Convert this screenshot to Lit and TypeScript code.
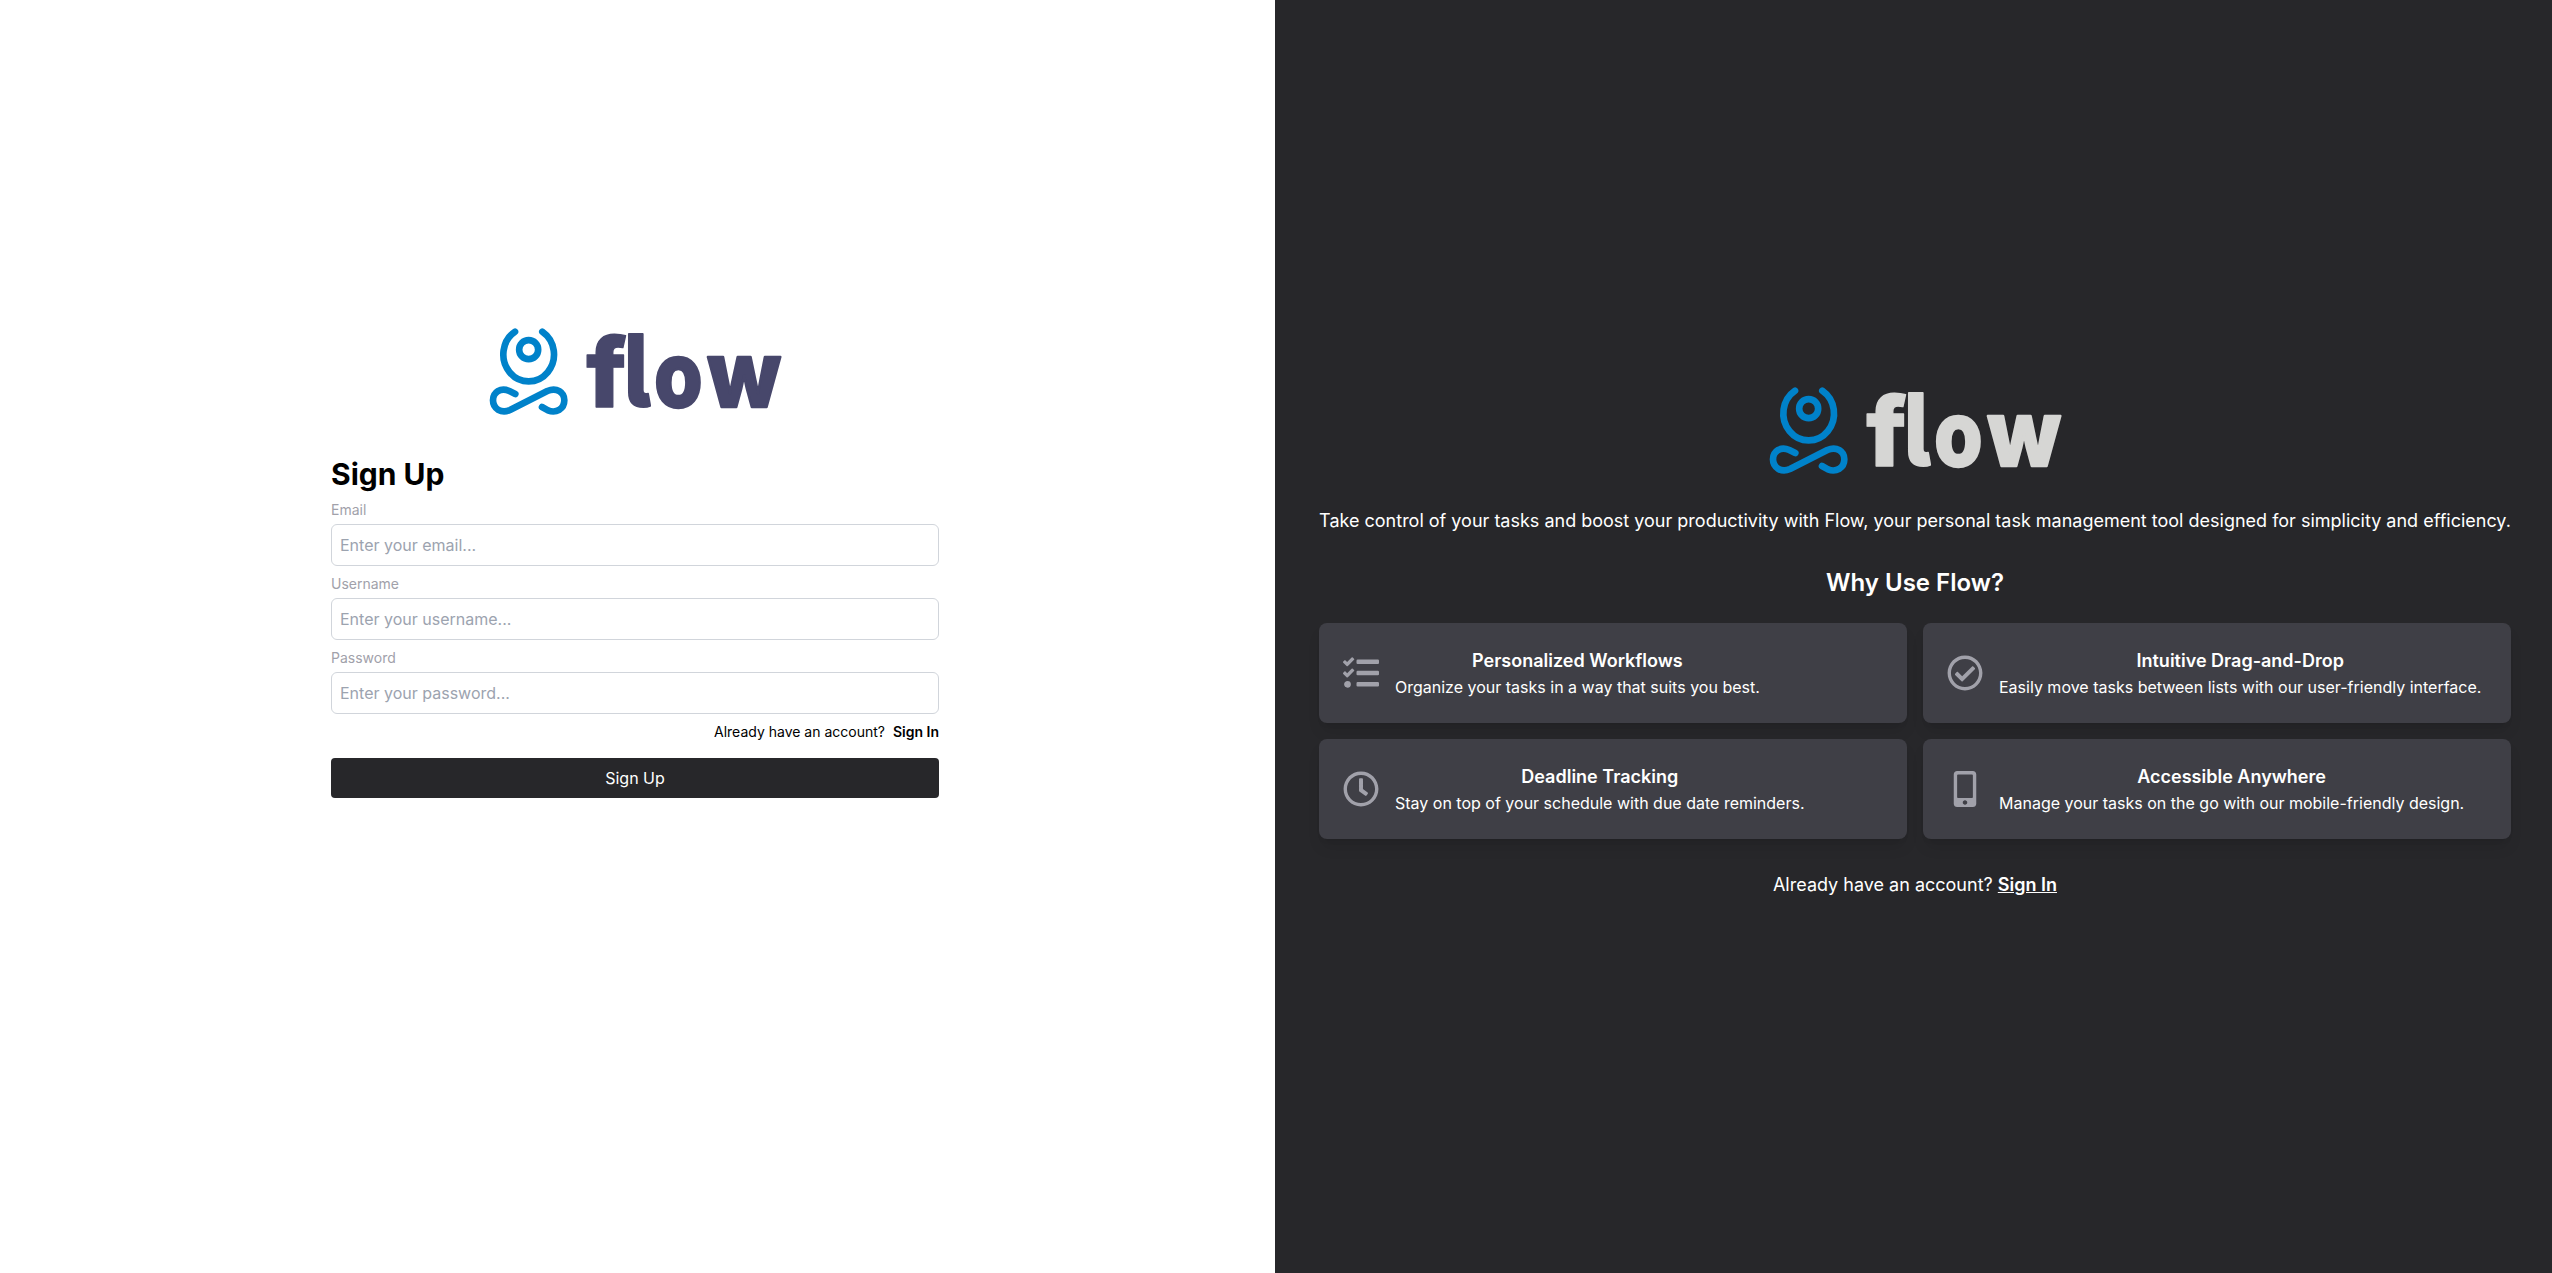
import { LitElement, html, css, svg } from "lit";
import { customElement, property } from "lit/decorators.js";

const ICONS: Record<string, { box: string; path: string }> = {
  tasks: {
    box: "0 0 512 512",
    path: "M139.61 35.5a12 12 0 0 0-17 0L58.93 98.81l-22.7-22.12a12 12 0 0 0-17 0L3.53 92.41a12 12 0 0 0 0 17l47.59 47.4a12.78 12.78 0 0 0 17.61 0l15.59-15.62L156.52 69a12.09 12.09 0 0 0 .09-17zm0 159.19a12 12 0 0 0-17 0l-63.68 63.72-22.7-22.1a12 12 0 0 0-17 0L3.53 252a12 12 0 0 0 0 17L51 316.5a12.77 12.77 0 0 0 17.6 0l15.7-15.69 72.2-72.22a12 12 0 0 0 .09-16.9zM64 368c-26.49 0-48.59 21.5-48.59 48S37.53 464 64 464a48 48 0 0 0 0-96zm432 16H208a16 16 0 0 0-16 16v32a16 16 0 0 0 16 16h288a16 16 0 0 0 16-16v-32a16 16 0 0 0-16-16zm0-320H208a16 16 0 0 0-16 16v32a16 16 0 0 0 16 16h288a16 16 0 0 0 16-16V80a16 16 0 0 0-16-16zm0 160H208a16 16 0 0 0-16 16v32a16 16 0 0 0 16 16h288a16 16 0 0 0 16-16v-32a16 16 0 0 0-16-16z",
  },
  check: {
    box: "0 0 512 512",
    path: "M256 8C119.033 8 8 119.033 8 256s111.033 248 248 248 248-111.033 248-248S392.967 8 256 8zm0 48c110.532 0 200 89.451 200 200 0 110.532-89.451 200-200 200-110.532 0-200-89.451-200-200 0-110.532 89.451-200 200-200m140.204 130.267l-22.536-22.718c-4.667-4.705-12.265-4.736-16.97-.068L215.346 303.697l-59.792-60.277c-4.667-4.705-12.265-4.736-16.97-.069l-22.719 22.536c-4.705 4.667-4.736 12.265-.068 16.971l90.781 91.516c4.667 4.705 12.265 4.736 16.97.068l172.589-171.204c4.704-4.668 4.734-12.266.067-16.971z",
  },
  clock: {
    box: "0 0 512 512",
    path: "M256 8C119 8 8 119 8 256s111 248 248 248 248-111 248-248S393 8 256 8zm0 448c-110.5 0-200-89.5-200-200S145.5 56 256 56s200 89.5 200 200-89.5 200-200 200zm61.8-104.4l-84.9-61.7c-3.1-2.3-4.9-5.9-4.9-9.7V116c0-6.6 5.4-12 12-12h32c6.6 0 12 5.4 12 12v141.7l66.8 48.6c5.4 3.9 6.5 11.4 2.6 16.8L334.6 349c-3.9 5.3-11.4 6.5-16.8 2.6z",
  },
  mobile: {
    box: "0 0 320 512",
    path: "M272 0H48C21.5 0 0 21.5 0 48v416c0 26.5 21.5 48 48 48h224c26.5 0 48-21.5 48-48V48c0-26.5-21.5-48-48-48zM160 480c-17.7 0-32-14.3-32-32s14.3-32 32-32 32 14.3 32 32-14.3 32-32 32zm112-108c0 6.6-5.4 12-12 12H60c-6.6 0-12-5.4-12-12V60c0-6.6 5.4-12 12-12h200c6.6 0 12 5.4 12 12v312z",
  },
};

const FIELDS = [
  { label: "Email", type: "email", hint: "Enter your email..." },
  { label: "Username", type: "text", hint: "Enter your username..." },
  { label: "Password", type: "password", hint: "Enter your password..." },
];

const FEATURES = [
  { icon: "tasks", title: "Personalized Workflows", text: "Organize your tasks in a way that suits you best." },
  { icon: "check", title: "Intuitive Drag-and-Drop", text: "Easily move tasks between lists with our user-friendly interface." },
  { icon: "clock", title: "Deadline Tracking", text: "Stay on top of your schedule with due date reminders." },
  { icon: "mobile", title: "Accessible Anywhere", text: "Manage your tasks on the go with our mobile-friendly design." },
];

// Word mark letters: x offset, scale on each axis and outline that rounds the corners.
const LETTERS = [
  { ch: "f", x: 349, sx: 1.03, sy: 1.01, edge: 4 },
  { ch: "l", x: 463, sx: 0.86, sy: 1.05, edge: 6 },
  { ch: "o", x: 553, sx: 0.82, sy: 0.96, edge: 8 },
  { ch: "w", x: 712, sx: 0.9, sy: 0.96, edge: 8 },
];

@customElement("flow-logo")
export class FlowLogo extends LitElement {
  @property() tone = "#47476b";

  static styles = css`
    :host { display: block; width: 340px; height: 120px; }
    svg { display: block; width: 340px; height: 120px; overflow: visible; }
    .mark { fill: none; stroke: #0082ca; stroke-width: 20; stroke-linecap: round; stroke-linejoin: round; }
    .word {
      font-family: Inter, sans-serif; font-weight: 800; font-size: 285px; font-feature-settings: "cv05" 1;
      stroke-linejoin: round;
    }
  `;

  render() {
    return html`<svg viewBox="-15 0 1020 360" role="img" aria-label="flow">
      <g class="mark">
        <circle cx="176" cy="119" r="28.5"></circle>
        <path d="M135 65A76 81 0 1 0 217 65"></path>
        <path d="M136 252L118 243C92 231 69 247 69 271C69 296 94 312 120 300L232 243C260 231 283 247 283 271C283 297 258 311 234 301L216 291"></path>
      </g>
      <g class="word" fill=${this.tone} stroke=${this.tone}>
        ${LETTERS.map(
          (l) => svg`<text stroke-width=${l.edge} transform="translate(${l.x} 292) scale(${l.sx} ${l.sy})">${l.ch}</text>`
        )}
      </g>
    </svg>`;
  }
}

@customElement("feature-card")
export class FeatureCard extends LitElement {
  @property() icon = "tasks";
  @property() heading = "";
  @property() text = "";

  static styles = css`
    :host {
      display: flex; align-items: center; gap: 16px; padding: 24px; box-sizing: border-box; height: 100px;
      background: #3f3f46; border-radius: 8px;
      box-shadow: 0 10px 15px -3px rgb(0 0 0 / 0.1), 0 4px 6px -4px rgb(0 0 0 / 0.1);
    }
    .icon { width: 36px; height: 36px; flex: none; fill: #a1a1aa; }
    .copy { text-align: center; white-space: nowrap; }
    .title { margin: 0; font-size: 18px; line-height: 28px; font-weight: 600; }
    .text { margin: 0; font-size: 16px; line-height: 24px; }
  `;

  render() {
    const icon = ICONS[this.icon];
    return html`
      <svg class="icon" viewBox=${icon.box}><path d=${icon.path}></path></svg>
      <div class="copy">
        <h3 class="title">${this.heading}</h3>
        <p class="text">${this.text}</p>
      </div>`;
  }
}

@customElement("app-root")
export class AppRoot extends LitElement {
  static styles = css`
    :host {
      display: grid; grid-template-columns: 1275px 1fr; height: 1273px; overflow: hidden;
      font-family: Inter, sans-serif; font-size: 16px; line-height: 24px; background: #fff; color: #000;
    }
    .left { display: flex; flex-direction: column; align-items: center; padding: 310px 5px 0 0; }
    .form { width: 608px; margin-top: 26px; display: flex; flex-direction: column; }
    .heading { margin: 0 0 8px; font-size: 30px; line-height: 36px; font-weight: 700; }
    .field { display: flex; flex-direction: column; gap: 4px; margin-bottom: 8px; }
    .label { font-size: 14px; line-height: 20px; color: #a1a1aa; }
    .input {
      box-sizing: border-box; width: 100%; height: 42px; padding: 8px; border: 1px solid #d1d5db; border-radius: 6px;
      font: inherit; background: #fff; outline: none;
    }
    .input::placeholder { color: #9ca3af; opacity: 1; }
    .prompt { display: flex; justify-content: flex-end; gap: 8px; font-size: 14px; line-height: 20px; }
    .strong { font-weight: 600; }
    .submit {
      margin-top: 16px; height: 40px; border: 0; border-radius: 4px; background: #27272a; color: #fff;
      font: inherit; padding: 0;
    }
    .right {
      display: flex; flex-direction: column; align-items: center; box-sizing: border-box;
      padding: 369px 41px 0 44px; background: #27272a; color: #fff;
    }
    .tagline { margin: 18px 0 0; font-size: 18px; line-height: 28px; white-space: nowrap; }
    .why { margin: 32px 0 24px; font-size: 24px; line-height: 32px; font-weight: 600; }
    .cards { display: grid; grid-template-columns: 1fr 1fr; gap: 16px; align-self: stretch; }
    .footer { margin: 32px 0 0; font-size: 18px; line-height: 28px; }
    .link { font-weight: 600; text-decoration: underline; }
  `;

  render() {
    return html`
      <section class="left">
        <flow-logo></flow-logo>
        <form class="form">
          <h1 class="heading">Sign Up</h1>
          ${FIELDS.map(
            (f) => html`<label class="field">
              <span class="label">${f.label}</span>
              <input class="input" type=${f.type} placeholder=${f.hint} />
            </label>`
          )}
          <div class="prompt"><span>Already have an account?</span><span class="strong">Sign In</span></div>
          <button class="submit" type="button">Sign Up</button>
        </form>
      </section>
      <section class="right">
        <flow-logo tone="#d6d6d4"></flow-logo>
        <p class="tagline">Take control of your tasks and boost your productivity with Flow, your personal task management tool designed for simplicity and efficiency.</p>
        <h2 class="why">Why Use Flow?</h2>
        <div class="cards">
          ${FEATURES.map((f) => html`<feature-card icon=${f.icon} heading=${f.title} text=${f.text}></feature-card>`)}
        </div>
        <p class="footer">Already have an account? <span class="link">Sign In</span></p>
      </section>`;
  }
}
